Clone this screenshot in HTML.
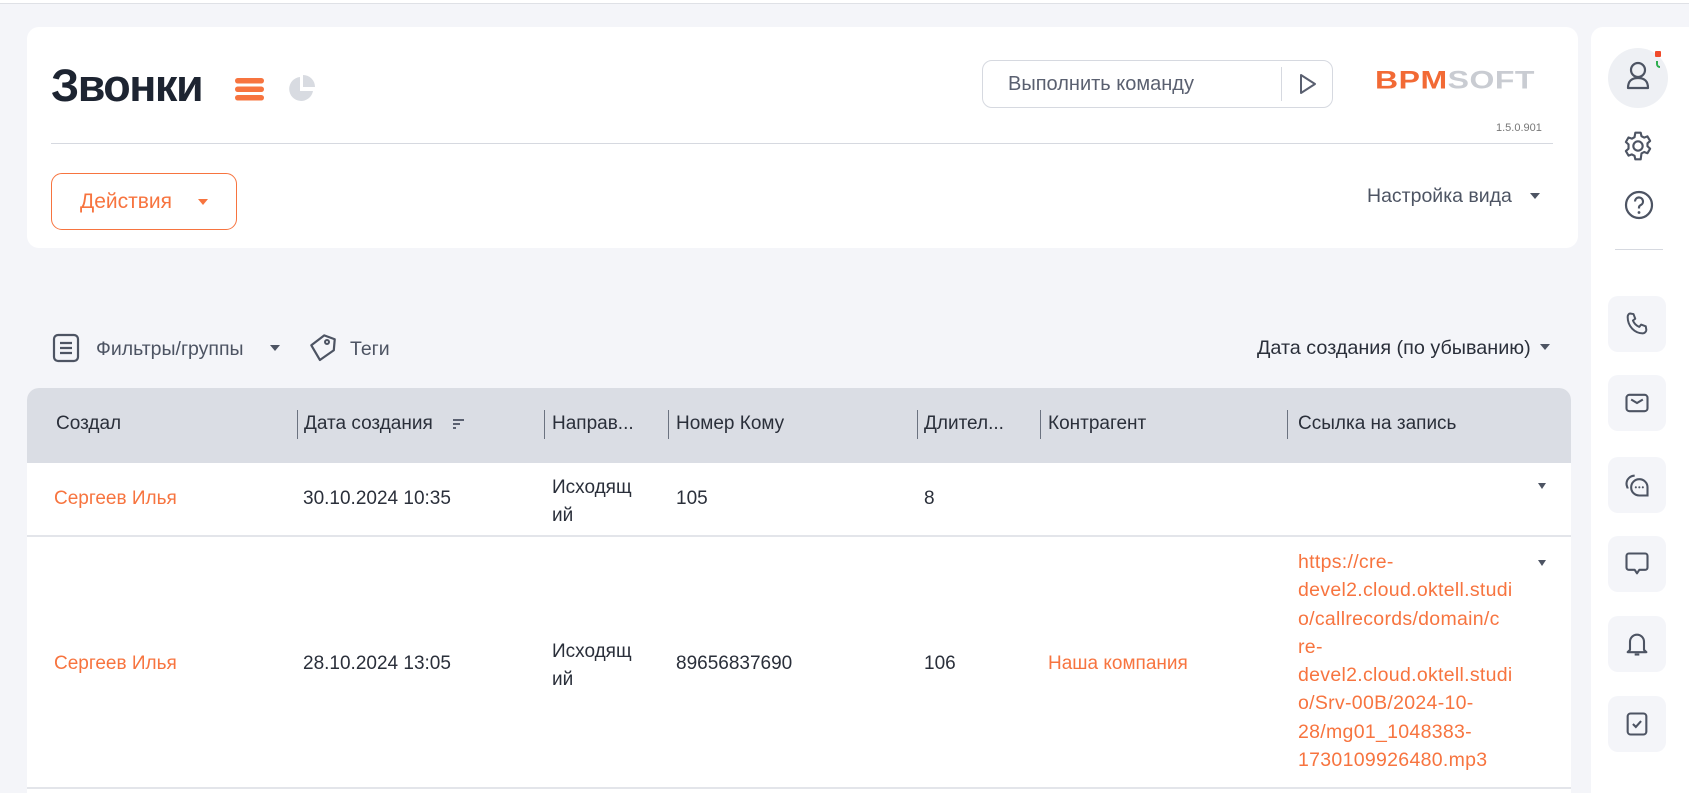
<!DOCTYPE html>
<html><head><meta charset="utf-8"><style>
*{box-sizing:border-box;margin:0;padding:0}
body{width:1689px;height:793px;overflow:hidden;background:#f4f5f9;font-family:"Liberation Sans",sans-serif;color:#2a2f3a;position:relative;font-size:19px}
.abs{position:absolute}
.top{left:0;top:0;width:1689px;height:4px;border-bottom:1px solid #dfe1e6;background:#fff}
.card{left:27px;top:27px;width:1551px;height:221px;background:#fff;border-radius:12px}
.or{color:#f7743f}
.side{left:1591px;top:27px;width:98px;height:766px;background:#fff;border-radius:12px 0 0 0}
.sbtn{position:absolute;left:17px;width:58px;height:56px;background:#f4f5f9;border-radius:10px}
.sbtn svg{position:absolute;left:15px;top:14px}
.table{left:27px;top:388px;width:1544px;height:405px;background:#fff;border-radius:12px 12px 0 0;overflow:hidden}
.th{position:absolute;top:0;left:0;width:100%;height:75px;background:#dadde4}
.h{position:absolute;top:25px;font-size:19px;color:#2a2f3a;white-space:nowrap}
.dv{position:absolute;top:22px;width:1px;height:29px;background:#6b7280}
.c{position:absolute;white-space:nowrap}
.rl{position:absolute;left:0;width:100%;height:2px;background:#e3e5ea}
</style></head><body>
<div class="abs top"></div>
<div class="abs card"></div>
<div class="abs" style="left:51px;top:60px;font-size:45px;font-weight:bold;color:#1d2431;letter-spacing:-1.5px">Звонки</div>
<svg class="abs" style="left:235px;top:78px" width="29" height="23"><rect x="0" y="0" width="29" height="5.5" rx="2.7" fill="#f7743f"/><rect x="0" y="8.5" width="29" height="5.5" rx="2.7" fill="#f7743f"/><rect x="0" y="17" width="29" height="5.5" rx="2.7" fill="#f7743f"/></svg>
<svg class="abs" style="left:287px;top:74px" width="30" height="30"><path d="M13 3 A12 12 0 1 0 26 17 L13 17 Z" fill="#d8dbe1"/><path d="M16 1 A12 12 0 0 1 28 13 L16 13 Z" fill="#d8dbe1"/></svg>
<div class="abs" style="left:982px;top:60px;width:351px;height:48px;border:1px solid #d6d9e0;border-radius:10px"></div>
<div class="abs" style="left:1008px;top:73px;font-size:20px;color:#5a6070">Выполнить команду</div>
<div class="abs" style="left:1281px;top:67px;width:1px;height:34px;background:#d6d9e0"></div>
<svg class="abs" style="left:1297px;top:72px" width="22" height="24"><path d="M4 3 L18 12 L4 21 Z" fill="none" stroke="#5a6070" stroke-width="2" stroke-linejoin="round"/></svg>
<div class="abs" style="left:1375px;top:66px;font-size:32px;font-weight:bold;letter-spacing:0.5px;transform:scaleY(0.78);transform-origin:left top;line-height:36px"><span style="color:#f26a35">BPM</span><span style="color:#c9ccd2">SOFT</span></div>
<div class="abs" style="left:1496px;top:122px;font-size:11px;color:#777">1.5.0.901</div>
<div class="abs" style="left:51px;top:143px;width:1502px;height:1px;background:#d6d9e0"></div>
<div class="abs" style="left:51px;top:173px;width:186px;height:57px;border:1.5px solid #f7743f;border-radius:11px"></div>
<div class="abs or" style="left:80px;top:190px;font-size:21px">Действия</div>
<div class="abs" style="left:198px;top:199px;border:5px solid transparent;border-top:6px solid #f7743f"></div>
<div class="abs" style="left:1367px;top:185px;font-size:19.5px;color:#4d5463">Настройка вида</div>
<div class="abs" style="left:1530px;top:193px;border:5px solid transparent;border-top:6px solid #4d5463"></div>

<svg class="abs" style="left:52px;top:333px" width="30" height="30"><rect x="2" y="2" width="24" height="26" rx="4" fill="none" stroke="#4d5463" stroke-width="2.2"/><path d="M8 10h12M8 15h12M8 20h12" stroke="#4d5463" stroke-width="2.2"/></svg>
<div class="abs" style="left:96px;top:338px;font-size:19.5px;color:#4d5463">Фильтры/группы</div>
<div class="abs" style="left:270px;top:345px;border:5px solid transparent;border-top:6px solid #4d5463"></div>
<svg class="abs" style="left:305px;top:332px" width="32" height="32"><path d="M6 15 L17 3 L28 5 L29 16 L17 28 Z" fill="none" stroke="#4d5463" stroke-width="2.2" stroke-linejoin="round" transform="rotate(10 16 16)"/><circle cx="22" cy="10" r="2" fill="none" stroke="#4d5463" stroke-width="2"/></svg>
<div class="abs" style="left:350px;top:338px;font-size:19.5px;color:#4d5463">Теги</div>
<div class="abs" style="left:1257px;top:337px;font-size:19.8px;color:#2a2f3a">Дата создания (по убыванию)</div>
<div class="abs" style="left:1540px;top:344px;border:5px solid transparent;border-top:6px solid #4d5463"></div>

<div class="abs table">
<div class="th"></div>
<div class="h" style="left:29px">Создал</div>
<div class="dv" style="left:270px"></div><div class="h" style="left:277px">Дата создания</div>
<svg style="position:absolute;left:425px;top:30px" width="14" height="14"><path d="M1 2h11M1 6h7M1 10h3" stroke="#5a6070" stroke-width="2"/></svg>
<div class="dv" style="left:517px"></div><div class="h" style="left:525px">Направ...</div>
<div class="dv" style="left:641px"></div><div class="h" style="left:649px">Номер Кому</div>
<div class="dv" style="left:890px"></div><div class="h" style="left:897px">Длител...</div>
<div class="dv" style="left:1013px"></div><div class="h" style="left:1021px">Контрагент</div>
<div class="dv" style="left:1260px"></div><div class="h" style="left:1271px">Ссылка на запись</div>

<div class="c or" style="left:27px;top:100px">Сергеев Илья</div>
<div class="c" style="left:276px;top:100px">30.10.2024 10:35</div>
<div class="c" style="left:525px;top:86px;line-height:28px">Исходящ<br>ий</div>
<div class="c" style="left:649px;top:100px">105</div>
<div class="c" style="left:897px;top:100px">8</div>
<div style="position:absolute;left:1511px;top:95px;border:4px solid transparent;border-top:6px solid #4d5463"></div>
<div class="rl" style="top:147px"></div>

<div class="c or" style="left:27px;top:265px">Сергеев Илья</div>
<div class="c" style="left:276px;top:265px">28.10.2024 13:05</div>
<div class="c" style="left:525px;top:250px;line-height:28px">Исходящ<br>ий</div>
<div class="c" style="left:649px;top:265px">89656837690</div>
<div class="c" style="left:897px;top:265px">106</div>
<div class="c or" style="left:1021px;top:265px">Наша компания</div>
<div class="c or" style="left:1271px;top:160px;line-height:28.3px;font-size:19.5px;letter-spacing:0.3px">https://cre-<br>devel2.cloud.oktell.studi<br>o/callrecords/domain/c<br>re-<br>devel2.cloud.oktell.studi<br>o/Srv-00B/2024-10-<br>28/mg01_1048383-<br>1730109926480.mp3</div>
<div style="position:absolute;left:1511px;top:172px;border:4px solid transparent;border-top:6px solid #4d5463"></div>
<div class="rl" style="top:399px"></div>
</div>

<div class="abs side">
<div style="position:absolute;left:17px;top:21px;width:60px;height:60px;border-radius:50%;background:#eef0f4"></div>
<svg style="position:absolute;left:34px;top:33px" width="28" height="32"><circle cx="13" cy="10" r="7" fill="none" stroke="#4d5463" stroke-width="2.2"/><path d="M3 28 q0-10 10-10 q10 0 10 10 Z" fill="none" stroke="#4d5463" stroke-width="2.2" stroke-linejoin="round"/></svg>
<div style="position:absolute;left:64px;top:24px;width:6px;height:6px;background:#f04a2a;border-radius:1px"></div>
<div style="position:absolute;left:65px;top:34px;width:4px;height:7px;border-left:2px solid #2eae4f;border-bottom:2px solid #2eae4f;border-radius:0 0 0 4px"></div>
<svg style="position:absolute;left:31px;top:103px" width="32" height="32" viewBox="0 0 24 24"><path d="M12 8.5a3.5 3.5 0 1 0 0 7a3.5 3.5 0 1 0 0-7zM10 2h4l.6 2.6 2 1.1 2.5-.9 2 3.4-2 1.8v2.2l2 1.8-2 3.4-2.5-.9-2 1.1L14 22h-4l-.6-2.6-2-1.1-2.5.9-2-3.4 2-1.8V10.8l-2-1.8 2-3.4 2.5.9 2-1.1z" fill="none" stroke="#4d5463" stroke-width="1.6" stroke-linejoin="round"/></svg>
<svg style="position:absolute;left:32px;top:162px" width="32" height="32"><circle cx="16" cy="16" r="13" fill="none" stroke="#4d5463" stroke-width="2.2"/><path d="M12 12.5a4 4 0 1 1 5.5 3.7c-1 .5-1.5 1.2-1.5 2.3v1" fill="none" stroke="#4d5463" stroke-width="2.2"/><circle cx="16" cy="23.5" r="1.4" fill="#4d5463"/></svg>
<div style="position:absolute;left:24px;top:222px;width:48px;height:1px;background:#d6d9e0"></div>
<div class="sbtn" style="top:269px"><svg width="28" height="28" viewBox="0 0 24 24"><path d="M6 3l3 .5 1.5 4-2 1.5c1 2.5 3 4.5 5.5 5.5l1.5-2 4 1.5.5 3c0 1.5-1.5 3-3 3C10 20 4 14 4 6c0-1.5 1-3 2-3z" fill="none" stroke="#4d5463" stroke-width="1.7" stroke-linejoin="round"/></svg></div>
<div class="sbtn" style="top:348px"><svg width="28" height="28" viewBox="0 0 24 24"><rect x="3" y="5" width="18" height="14" rx="2.5" fill="none" stroke="#4d5463" stroke-width="1.8"/><path d="M7 9l5 3 5-3" fill="none" stroke="#4d5463" stroke-width="1.8"/></svg></div>
<div class="sbtn" style="top:430px"><svg width="28" height="28" viewBox="0 0 24 24"><path d="M10 4a7 7 0 0 0-7 7c0 2 1 3 1 4" fill="none" stroke="#4d5463" stroke-width="1.8"/><path d="M14 7a7 7 0 0 0-7 7c0 4 3 7 7 7h7v-7a7 7 0 0 0-7-7z" fill="none" stroke="#4d5463" stroke-width="1.8"/><circle cx="11" cy="14" r=".9" fill="#4d5463"/><circle cx="14" cy="14" r=".9" fill="#4d5463"/><circle cx="17" cy="14" r=".9" fill="#4d5463"/></svg></div>
<div class="sbtn" style="top:509px"><svg width="28" height="28" viewBox="0 0 24 24"><path d="M5 3h14a2 2 0 0 1 2 2v10a2 2 0 0 1-2 2h-5l-2 3-2-3H5a2 2 0 0 1-2-2V5a2 2 0 0 1 2-2z" fill="none" stroke="#4d5463" stroke-width="1.8" stroke-linejoin="round"/></svg></div>
<div class="sbtn" style="top:589px"><svg width="28" height="28" viewBox="0 0 24 24"><path d="M6 17V10a6 6 0 0 1 12 0v7l2 2H4z" fill="none" stroke="#4d5463" stroke-width="1.8" stroke-linejoin="round"/><path d="M10 21h4" stroke="#4d5463" stroke-width="1.8"/></svg></div>
<div class="sbtn" style="top:669px"><svg width="28" height="28" viewBox="0 0 24 24"><rect x="4" y="3" width="16" height="18" rx="2.5" fill="none" stroke="#4d5463" stroke-width="1.8"/><path d="M8.5 12l2.5 2.5 4.5-5" fill="none" stroke="#4d5463" stroke-width="1.8"/></svg></div>
</div>
</body></html>
